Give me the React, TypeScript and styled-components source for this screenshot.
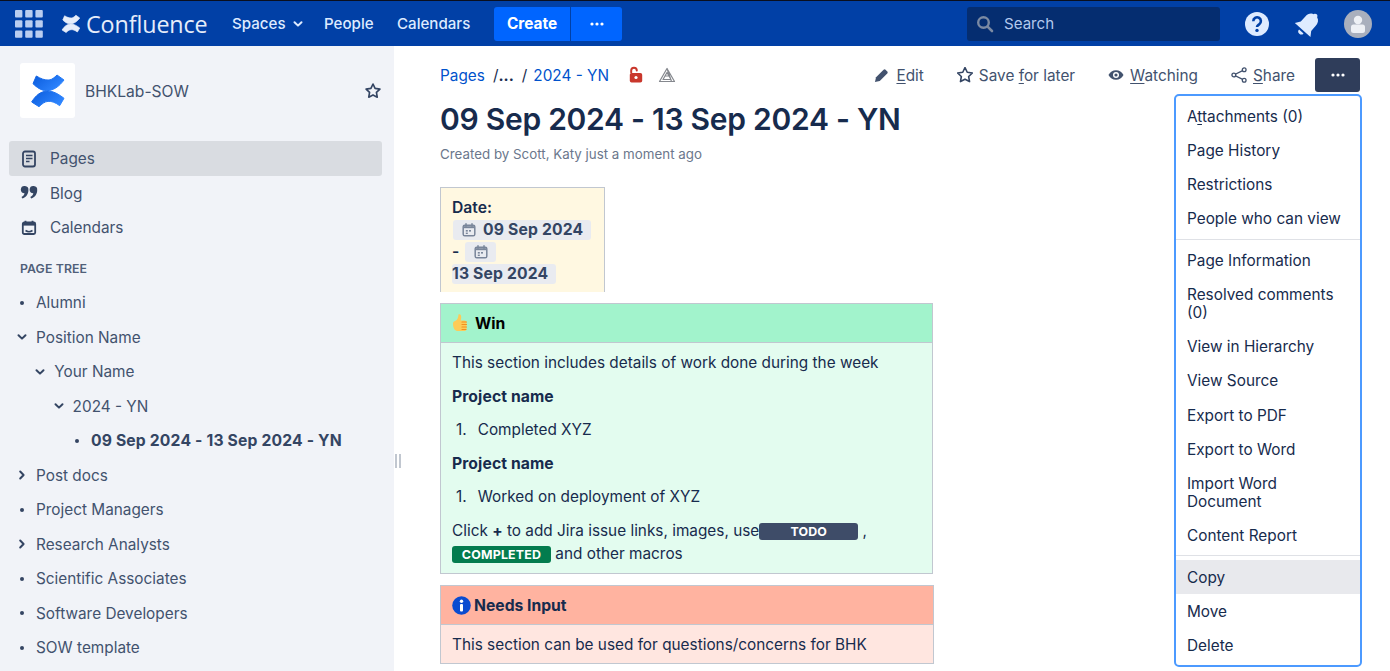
import React from "react";
import styled, { createGlobalStyle } from "styled-components";

const Global = createGlobalStyle`
  html, body { margin: 0; padding: 0; height: 100%; overflow: hidden; }
  body { font-family: Inter, "Liberation Sans", sans-serif; color: #172B4D; background: #fff; }
  #root { height: 100%; }
  * { box-sizing: border-box; }
`;

const Page = styled.div`
  position: relative;
  width: 1390px;
  height: 671px;
  overflow: hidden;
  display: flex;
  flex-direction: column;
`;

const TopBar = styled.header`
  height: 46px;
  flex: none;
  background: #0140a6;
  border-top: 1px solid #0a0f1e;
  display: flex;
  align-items: center;
  color: #deebff;
  padding: 0 20px 0 15px;
`;
const GridIcon = styled.svg`
  width: 28px;
  height: 28px;
  flex: none;
  margin-right: 18px;
`;
const LogoMark = styled.svg`
  width: 20px;
  height: 20px;
  flex: none;
  margin-right: 5px;
`;
const LogoText = styled.span`
  font-family: "Open Sans", sans-serif;
  font-size: 23.3px;
  font-weight: 400;
  color: #e6edfa;
  letter-spacing: -0.1px;
  width: 146px;
  flex: none;
`;
const NavLink = styled.span<{ $w: number }>`
  font-size: 15.1px;
  font-weight: 500;
  color: #deebff;
  width: ${(p) => p.$w}px;
  flex: none;
  display: flex;
  align-items: center;
  gap: 6px;
`;
const CreateGroup = styled.div`
  display: flex;
  gap: 1px;
  height: 34px;
  flex: none;
`;
const CreateBtn = styled.div`
  width: 76px;
  background: #0065ff;
  border-radius: 3px 0 0 3px;
  display: flex;
  align-items: center;
  justify-content: center;
  color: #fff;
  font-weight: 700;
  font-size: 15.4px;
`;
const CreateMore = styled.div`
  width: 51px;
  background: #0065ff;
  border-radius: 0 3px 3px 0;
  display: flex;
  align-items: center;
  justify-content: center;
`;
const Search = styled.div`
  margin-left: 345px;
  width: 253px;
  height: 34px;
  background: #052d70;
  border-radius: 3px;
  display: flex;
  align-items: center;
  padding-left: 8px;
  gap: 9px;
  color: #b3c8ec;
  font-size: 15.1px;
  line-height: 36px;
  flex: none;
`;
const RightIcons = styled.div`
  display: flex;
  align-items: center;
  margin-left: 24px;
  flex: none;
`;
const HelpWrap = styled.svg`
  width: 26px;
  height: 26px;
  margin-right: 23px;
`;
const BellWrap = styled.svg`
  width: 30px;
  height: 30px;
  margin-right: 21px;
`;
const AvatarWrap = styled.svg`
  width: 28px;
  height: 28px;
`;

const Body = styled.div`
  flex: 1;
  display: flex;
  min-height: 0;
`;

const Sidebar = styled.aside`
  width: 394px;
  flex: none;
  background: #f1f3f8;
  position: relative;
  padding: 17px 12px 0 9px;
`;
const SpaceHead = styled.div`
  display: flex;
  align-items: center;
  height: 55px;
  padding-left: 11px;
  margin-bottom: 23.25px;
`;
const SpaceLogo = styled.div`
  width: 55px;
  height: 55px;
  background: #fff;
  border-radius: 3px;
  display: flex;
  align-items: center;
  justify-content: center;
  flex: none;
`;
const SpaceName = styled.span`
  margin-left: 10px;
  padding-top: 2px;
  font-size: 15.6px;
  color: #42526e;
  flex: 1;
`;
const SideStar = styled.svg`
  width: 20px;
  height: 20px;
  flex: none;
  margin-right: -1px;
`;
const SideNavRow = styled.div<{ $active?: boolean }>`
  height: 34.5px;
  display: flex;
  align-items: center;
  padding-left: 11px;
  border-radius: 3px;
  background: ${(p) => (p.$active ? "#d9dce1" : "transparent")};
  color: #42526e;
  font-size: 15.35px;
  gap: 12px;
`;
const NavIcon = styled.svg`
  width: 18px;
  height: 18px;
  flex: none;
`;
const SideNav = styled.nav`
  display: flex;
  flex-direction: column;
`;
const TreeLabel = styled.div`
  font-size: 12.3px;
  font-weight: 600;
  color: #505f79;
  padding-left: 11px;
  margin-top: 6.5px;
  height: 34px;
  display: flex;
  align-items: center;
  letter-spacing: 0.1px;
`;
const Tree = styled.div`
  display: flex;
  flex-direction: column;
`;
const TreeRow = styled.div<{ $level: number; $bold?: boolean }>`
  height: 34.5px;
  display: flex;
  align-items: center;
  padding-left: ${(p) => 4 + p.$level * 18.3}px;
  color: ${(p) => (p.$bold ? "#344563" : "#42526e")};
  font-size: ${(p) => (p.$bold ? "15.7px" : "15.35px")};
  letter-spacing: ${(p) => (p.$bold ? "0.17px" : "0")};
  font-weight: ${(p) => (p.$bold ? 700 : 400)};
`;
const TreeToggle = styled.span`
  width: 18px;
  height: 18px;
  flex: none;
  margin-right: 5px;
  display: flex;
  align-items: center;
  justify-content: center;
`;
const Dot = styled.span`
  width: 4px;
  height: 4px;
  border-radius: 50%;
  background: #344563;
`;
const Grabber = styled.div`
  position: absolute;
  right: -7px;
  top: 408px;
  width: 6px;
  height: 14px;
  border-left: 2px solid #c1c7d0;
  border-right: 2px solid #c1c7d0;
`;

const Main = styled.main`
  flex: 1;
  padding: 12px 30px 0 46px;
  min-width: 0;
`;
const Toolbar = styled.div`
  display: flex;
  align-items: center;
  height: 34px;
`;
const Crumbs = styled.div`
  display: flex;
  align-items: center;
  font-size: 15.35px;
  flex: 1;
  color: #172b4d;
`;
const Crumb = styled.span`
  color: #0052cc;
`;
const Sep = styled.span<{ $l: number; $r: number }>`
  margin: 0 ${(p) => p.$r}px 0 ${(p) => p.$l}px;
  color: #172b4d;
`;
const CrumbIcon = styled.svg<{ $l: number }>`
  width: 18px;
  height: 18px;
  margin-left: ${(p) => p.$l}px;
  flex: none;
`;
const Action = styled.span<{ $r: number }>`
  display: flex;
  align-items: center;
  gap: 6px;
  font-size: 15.35px;
  color: #42526e;
  margin-right: ${(p) => p.$r}px;
  u {
    text-underline-offset: 2px;
  }
`;
const ActionIcon = styled.svg`
  width: 16px;
  height: 16px;
  flex: none;
`;
const MoreBtn = styled.div`
  width: 45px;
  height: 34px;
  background: #2f3d5a;
  border-radius: 3px;
  display: flex;
  align-items: center;
  justify-content: center;
  flex: none;
`;
const Title = styled.h1`
  margin: 7px 0 0;
  font-size: 30px;
  line-height: 40px;
  font-weight: 600;
  color: #172b4d;
  letter-spacing: -0.27px;
`;
const Byline = styled.div`
  margin-top: 6px;
  font-size: 13.35px;
  line-height: 18px;
  color: #6b778c;
`;
const DateCell = styled.div`
  margin-top: 24px;
  width: 165px;
  height: 105px;
  background: #fff8e1;
  border: 1px solid #c1c7d0;
  border-bottom: none;
  padding: 9px 11px 0;
  font-size: 15.7px;
  line-height: 22px;
  color: #172b4d;
  font-weight: 600;
`;
const DateLine = styled.div`
  display: flex;
  align-items: center;
  height: 22px;
`;
const DateChip = styled.span`
  display: inline-flex;
  align-items: center;
  height: 20px;
  background: #e9ebf0;
  border-radius: 3px;
  color: #344563;
  font-weight: 700;
  font-size: 15.7px;
  letter-spacing: 0.17px;
  padding: 0 8px;
  margin-left: 1px;
  gap: 6px;
  white-space: nowrap;
`;
const IconChip = styled(DateChip)`
  padding: 0 7px 0 8px;
  margin-left: 2px;
`;
const TextChip = styled(DateChip)`
  padding: 0 8px 0 0;
  margin-left: 0;
`;
const Panel = styled.section<{ $w: number; $top: number }>`
  width: ${(p) => p.$w}px;
  margin-top: ${(p) => p.$top}px;
  border: 1px solid #c1c7d0;
  font-size: 15.35px;
  color: #172b4d;
`;
const PanelHead = styled.div<{ $bg: string }>`
  height: 39px;
  background: ${(p) => p.$bg};
  border-bottom: 1px solid #c1c7d0;
  display: flex;
  align-items: center;
  padding-left: 11px;
  gap: 3px;
  font-weight: 700;
  font-size: 15.7px;
  color: #172b4d;
`;
const WinTitle = styled.span`
  color: #000;
`;
const PanelBody = styled.div<{ $bg: string; $bottom: number }>`
  background: ${(p) => p.$bg};
  padding: 8px 11px ${(p) => p.$bottom}px;
  line-height: 23px;
`;
const Para = styled.p<{ $t?: number }>`
  margin: ${(p) => p.$t ?? 0}px 0 0;
`;
const List = styled.div`
  display: flex;
  gap: 11px;
  margin: 10px 0 0 4px;
`;
const Bold = styled.strong`
  font-weight: 700;
  font-size: 15.7px;
  letter-spacing: 0.1px;
`;
const Lozenge = styled.span<{ $bg: string; $w: number }>`
  display: inline-flex;
  align-items: center;
  justify-content: center;
  height: 17px;
  width: ${(p) => p.$w}px;
  background: ${(p) => p.$bg};
  color: #fff;
  border-radius: 3px;
  font-size: 12.4px;
  font-weight: 700;
  letter-spacing: 0.2px;
`;

const Menu = styled.div`
  position: absolute;
  left: 1174px;
  top: 94px;
  width: 188px;
  height: 573px;
  border: 2px solid #4c9aff;
  border-radius: 5px;
  background: #fff;
  padding: 4px 0;
  display: flex;
  flex-direction: column;
`;
const MenuItem = styled.div<{ $hi?: boolean; $t?: number }>`
  padding: ${(p) => (p.$hi ? "9px 11px 7px" : "8px 11px")};
  margin-top: ${(p) => p.$t ?? 0}px;
  font-size: 15.35px;
  line-height: 18px;
  color: #172b4d;
  background: ${(p) => (p.$hi ? "#e8e9ed" : "transparent")};
  u {
    text-underline-offset: 2px;
  }
`;
const MenuDivider = styled.hr<{ $t?: number }>`
  border: none;
  border-top: 1px solid #dfe1e6;
  margin: ${(p) => p.$t ?? 3}px 0 4px;
  height: 0;
`;

const TOP_BAND =
  "M47 40C60 48 72 53 85 52C94 51 101 45 109 37L130 52C115 72 98 84 78 84C62 84 48 74 37 63Z";
const BOTTOM_BAND =
  "M33 118C45 98 60 86 80 85C98 85 115 95 130 107L117 129C105 120 93 115 82 116C72 117 63 124 55 132Z";

const STAR =
  "M12 3.6l2.5 5.3 5.8.8-4.2 4 1 5.7L12 16.7l-5.1 2.7 1-5.7-4.2-4 5.8-.8z";

const Dots = ({ c = "#fff" }: { c?: string }) => (
  <svg width="16" height="6" viewBox="0 0 16 6">
    <circle cx="3" cy="3" r="1.6" fill={c} />
    <circle cx="8" cy="3" r="1.6" fill={c} />
    <circle cx="13" cy="3" r="1.6" fill={c} />
  </svg>
);
const Chevron = ({ dir, c = "#344563" }: { dir: "down" | "right"; c?: string }) => (
  <svg width="12" height="12" viewBox="0 0 12 12">
    <path
      d={dir === "down" ? "M2.5 4.2L6 7.6l3.5-3.4" : "M4.2 2.5L7.6 6l-3.4 3.5"}
      fill="none"
      stroke={c}
      strokeWidth="2"
      strokeLinecap="round"
      strokeLinejoin="round"
    />
  </svg>
);
const Cal = () => (
  <svg width="16" height="16" viewBox="0 0 16 16">
    <rect x="2.2" y="3.2" width="11.6" height="10.6" rx="1.6" fill="none" stroke="#7a869a" strokeWidth="1.5" />
    <path d="M2.5 5.2h11" stroke="#7a869a" strokeWidth="2" />
    <path d="M5 1.8v2.4M11 1.8v2.4" stroke="#7a869a" strokeWidth="1.5" strokeLinecap="round" />
    <rect x="4.8" y="8" width="2" height="1.6" fill="#7a869a" />
    <rect x="8" y="8" width="2" height="1.6" fill="#7a869a" />
    <rect x="4.8" y="10.6" width="2" height="1.4" fill="#7a869a" />
  </svg>
);

const tree: { label: string; level: number; kind: "dot" | "down" | "right"; bold?: boolean }[] = [
  { label: "Alumni", level: 0, kind: "dot" },
  { label: "Position Name", level: 0, kind: "down" },
  { label: "Your Name", level: 1, kind: "down" },
  { label: "2024 - YN", level: 2, kind: "down" },
  { label: "09 Sep 2024 - 13 Sep 2024 - YN", level: 3, kind: "dot", bold: true },
  { label: "Post docs", level: 0, kind: "right" },
  { label: "Project Managers", level: 0, kind: "dot" },
  { label: "Research Analysts", level: 0, kind: "right" },
  { label: "Scientific Associates", level: 0, kind: "dot" },
  { label: "Software Developers", level: 0, kind: "dot" },
  { label: "SOW template", level: 0, kind: "dot" },
];

export default function App() {
  return (
    <Page>
      <Global />
      <TopBar>
        <GridIcon viewBox="0 0 28 28">
          {[0, 1, 2].flatMap((r) =>
            [0, 1, 2].map((c) => (
              <rect key={`${r}${c}`} x={c * 10.2} y={r * 10.2} width="7.4" height="7.4" rx="1" fill="#b9cdf0" />
            ))
          )}
        </GridIcon>
        <LogoMark viewBox="27 30 110 110">
          <path d={TOP_BAND} fill="#e6edfa" stroke="#e6edfa" strokeWidth="4" strokeLinejoin="round" />
          <path d={BOTTOM_BAND} fill="#e6edfa" stroke="#e6edfa" strokeWidth="4" strokeLinejoin="round" />
        </LogoMark>
        <LogoText>Confluence</LogoText>
        <NavLink $w={92}>
          Spaces
          <Chevron dir="down" c="#deebff" />
        </NavLink>
        <NavLink $w={73}>People</NavLink>
        <NavLink $w={97}>Calendars</NavLink>
        <CreateGroup>
          <CreateBtn>Create</CreateBtn>
          <CreateMore>
            <Dots />
          </CreateMore>
        </CreateGroup>
        <Search>
          <svg width="20" height="20" viewBox="0 0 20 20">
            <circle cx="8.5" cy="8.5" r="5.3" fill="none" stroke="#7b8aa3" strokeWidth="2.4" />
            <path d="M12.6 12.6l4.4 4.4" stroke="#7b8aa3" strokeWidth="2.6" strokeLinecap="round" />
          </svg>
          Search
        </Search>
        <RightIcons>
          <HelpWrap viewBox="0 0 26 26">
            <circle cx="13" cy="13" r="12" fill="#deebff" />
            <path d="M9.3 10.2a3.8 3.8 0 1 1 5.9 3.1c-1.3.9-2.2 1.3-2.2 2.8" fill="none" stroke="#0140a6" strokeWidth="2.6" />
            <circle cx="13" cy="19.4" r="1.7" fill="#0140a6" />
          </HelpWrap>
          <BellWrap viewBox="0 0 30 30">
            <g transform="rotate(42 15 15)">
              <path d="M15 2c-1 0-2 .7-2.200 1.800C9.500 4.800 8 7.800 8 11.500V18l-3.500 5h21L22 18v-6.500c0-3.700-1.500-6.700-4.800-7.700C17 2.700 16 2 15 2z" fill="#deebff" />
              <path d="M12 25h6a3 3 0 0 1-6 0z" fill="#deebff" />
            </g>
          </BellWrap>
          <AvatarWrap viewBox="0 0 28 28">
            <circle cx="14" cy="14" r="14" fill="#a9afbd" />
            <circle cx="14" cy="10" r="4.2" fill="#eef0f5" />
            <rect x="7" y="14.500" width="14" height="8.500" rx="2.500" fill="#eef0f5" />
          </AvatarWrap>
        </RightIcons>
      </TopBar>
      <Body>
        <Sidebar>
          <SpaceHead>
            <SpaceLogo>
              <svg width="38" height="38" viewBox="25 28 114 114">
                <defs>
                  <linearGradient id="confA" x1="0" y1="0" x2="1" y2="0.6">
                    <stop offset="0" stopColor="#0a5bdc" />
                    <stop offset="1" stopColor="#2f86ff" />
                  </linearGradient>
                </defs>
                <path d={TOP_BAND} fill="url(#confA)" stroke="url(#confA)" strokeWidth="3" strokeLinejoin="round" />
                <path d={BOTTOM_BAND} fill="url(#confA)" stroke="url(#confA)" strokeWidth="3" strokeLinejoin="round" />
              </svg>
            </SpaceLogo>
            <SpaceName>BHKLab-SOW</SpaceName>
            <SideStar viewBox="0 0 24 24">
              <path d={STAR} fill="none" stroke="#344563" strokeWidth="2" strokeLinejoin="round" />
            </SideStar>
          </SpaceHead>
          <SideNav>
            <SideNavRow $active>
              <NavIcon viewBox="0 0 18 18">
                <rect x="3" y="1.500" width="12" height="15" rx="2" fill="none" stroke="#344563" strokeWidth="1.800" />
                <path d="M6 5.500h6.500M6 8.500h6.500M6 11.500h3.500" stroke="#344563" strokeWidth="1.500" />
              </NavIcon>
              Pages
            </SideNavRow>
            <SideNavRow>
              <NavIcon viewBox="0 0 18 18">
                <path d="M.8 5.500a3.800 3.800 0 1 1 7.600.8c0 4-2.400 7.300-6 8.200l-.9-1.400c1.700-.8 2.700-2.200 3-3.800A3.800 3.800 0 0 1 .8 5.500zM9.600 5.500a3.800 3.800 0 1 1 7.600.8c0 4-2.400 7.300-6 8.200l-.9-1.400c1.700-.8 2.700-2.200 3-3.800a3.800 3.800 0 0 1-3.700-3.800z" fill="#344563" />
              </NavIcon>
              Blog
            </SideNavRow>
            <SideNavRow>
              <NavIcon viewBox="0 0 18 18">
                <rect x="2.800" y="3.500" width="12.400" height="11.500" rx="1.500" fill="none" stroke="#344563" strokeWidth="1.800" />
                <path d="M2.800 5.300h12.400" stroke="#344563" strokeWidth="2.600" />
                <path d="M5.500 1.800v2.500M12.500 1.800v2.500" stroke="#344563" strokeWidth="1.800" />
                <path d="M5.500 11.500c2 1.300 5 1.300 7 0" fill="none" stroke="#344563" strokeWidth="1.500" />
              </NavIcon>
              Calendars
            </SideNavRow>
          </SideNav>
          <TreeLabel>PAGE TREE</TreeLabel>
          <Tree>
            {tree.map((t) => (
              <TreeRow key={t.label} $level={t.level} $bold={t.bold}>
                <TreeToggle>{t.kind === "dot" ? <Dot /> : <Chevron dir={t.kind} />}</TreeToggle>
                {t.label}
              </TreeRow>
            ))}
          </Tree>
          <Grabber />
        </Sidebar>
        <Main>
          <Toolbar>
            <Crumbs>
              <Crumb>Pages</Crumb>
              <Sep $l={8} $r={0}>/</Sep>
              <b>...</b>
              <Sep $l={8} $r={6}>/</Sep>
              <Crumb>2024 - YN</Crumb>
              <CrumbIcon $l={18} viewBox="0 0 18 18">
                <path d="M4.200 6.500V4.500a2.800 2.800 0 0 1 5.600 0" fill="none" stroke="#c9372c" strokeWidth="2" strokeLinecap="round" />
                <rect x="2.800" y="7" width="12.400" height="9.500" rx="1.800" fill="#c9372c" />
                <circle cx="9" cy="11.500" r="1.600" fill="#fff" />
              </CrumbIcon>
              <CrumbIcon $l={13} viewBox="0 0 18 18">
                <path d="M9 2.500L1.500 15.500h15zM9 6.500l-4 7h8zM9 2.500l4.500 13M7.500 10l3 0" fill="none" stroke="#85888e" strokeWidth="1.200" strokeLinejoin="round" />
              </CrumbIcon>
            </Crumbs>
            <Action $r={33}>
              <ActionIcon viewBox="0 0 17 17">
                <path d="M1 16l1.200-5 8-8a1.500 1.500 0 0 1 2.100 0l1.800 1.800a1.500 1.500 0 0 1 0 2.100l-8 8z" fill="#42526e" />
              </ActionIcon>
              <span><u>E</u>dit</span>
            </Action>
            <Action $r={33}>
              <ActionIcon viewBox="3 3 18 18">
                <path d={STAR} fill="none" stroke="#344563" strokeWidth="1.800" strokeLinejoin="round" />
              </ActionIcon>
              <span>Save <u>f</u>or later</span>
            </Action>
            <Action $r={33}>
              <ActionIcon viewBox="0 0 17 17">
                <path d="M.5 8.500C2.200 5.300 5 3.500 8.500 3.500s6.300 1.800 8 5c-1.700 3.200-4.500 5-8 5s-6.300-1.800-8-5z" fill="#42526e" />
                <circle cx="8.500" cy="8.500" r="3.200" fill="#fff" />
                <circle cx="8.500" cy="8.500" r="1.700" fill="#42526e" />
              </ActionIcon>
              <span><u>W</u>atching</span>
            </Action>
            <Action $r={20}>
              <ActionIcon viewBox="0 0 17 17">
                <path d="M14 3L3 8.500l11 5.500" fill="none" stroke="#42526e" strokeWidth="1.400" />
                <circle cx="14" cy="3" r="2" fill="#fff" stroke="#42526e" strokeWidth="1.400" />
                <circle cx="3" cy="8.500" r="2" fill="#fff" stroke="#42526e" strokeWidth="1.400" />
                <circle cx="14" cy="14" r="2" fill="#fff" stroke="#42526e" strokeWidth="1.400" />
              </ActionIcon>
              <span><u>S</u>hare</span>
            </Action>
            <MoreBtn>
              <Dots />
            </MoreBtn>
          </Toolbar>
          <Title>09 Sep 2024 - 13 Sep 2024 - YN</Title>
          <Byline>Created by Scott, Katy just a moment ago</Byline>
          <DateCell>
            <DateLine>Date:</DateLine>
            <DateLine>
              <DateChip>
                <Cal />
                09 Sep 2024
              </DateChip>
            </DateLine>
            <DateLine>
              -&nbsp;
              <IconChip>
                <Cal />
              </IconChip>
            </DateLine>
            <DateLine>
              <TextChip>13 Sep 2024</TextChip>
            </DateLine>
          </DateCell>
          <Panel $w={493} $top={11}>
            <PanelHead $bg="#a2f3cc">
              <svg width="20" height="20" viewBox="0 0 20 20">
                <path d="M1 10.500c0-1.500 1-2.200 2.500-2.800 1.700-.8 2.700-2.500 3-6.200 1.800-.6 2.800.8 2.700 3-.1 1.200-.3 2.200-.5 3h3.800c1.300 0 2 1 2 2.200v6c0 1.300-.8 2.300-2 2.300H6c-3 0-5-2.500-5-7.500z" fill="#fdcb58" />
                <path d="M10 9h4.500M10 11.500h4.500M10 14h4.500M10 16.500h4" stroke="#f19020" strokeWidth="1.200" strokeLinecap="round" />
              </svg>
              <WinTitle>Win</WinTitle>
            </PanelHead>
            <PanelBody $bg="#e3fcef" $bottom={8}>
              <Para>This section includes details of work done during the week</Para>
              <Para $t={11}><Bold>Project name</Bold></Para>
              <List><span>1.</span><span>Completed XYZ</span></List>
              <Para $t={11}><Bold>Project name</Bold></Para>
              <List><span>1.</span><span>Worked on deployment of XYZ</span></List>
              <Para $t={11}>
                Click <b>+</b> to add Jira issue links, images, use<Lozenge $bg="#3e4c68" $w={99}>TODO</Lozenge> ,
                <br />
                <Lozenge $bg="#037c4e" $w={99}>COMPLETED</Lozenge> and other macros
              </Para>
            </PanelBody>
          </Panel>
          <Panel $w={494} $top={11}>
            <PanelHead $bg="#ffb3a0">
              <svg width="19" height="19" viewBox="0 0 19 19">
                <circle cx="9.500" cy="9.500" r="9.300" fill="#0a4bd0" />
                <circle cx="9.500" cy="5.300" r="1.700" fill="#fff" />
                <rect x="8" y="8" width="3" height="7.500" rx="1" fill="#fff" />
              </svg>
              Needs Input
            </PanelHead>
            <PanelBody $bg="#ffe6e0" $bottom={7}>This section can be used for questions/concerns for BHK</PanelBody>
          </Panel>
        </Main>
      </Body>
      <Menu>
        <MenuItem>A<u>t</u>tachments (0)</MenuItem>
        <MenuItem>Page History</MenuItem>
        <MenuItem>Restrictions</MenuItem>
        <MenuItem>People who can view</MenuItem>
        <MenuDivider />
        <MenuItem>Page Information</MenuItem>
        <MenuItem>Resolved comments (0)</MenuItem>
        <MenuItem>View in Hierarchy</MenuItem>
        <MenuItem>View Source</MenuItem>
        <MenuItem $t={1}>Export to PDF</MenuItem>
        <MenuItem>Export to Word</MenuItem>
        <MenuItem>Import Word Document</MenuItem>
        <MenuItem>Content Report</MenuItem>
        <MenuDivider $t={2} />
        <MenuItem $hi>Copy</MenuItem>
        <MenuItem $t={1}>Move</MenuItem>
        <MenuItem>Delete</MenuItem>
      </Menu>
    </Page>
  );
}
